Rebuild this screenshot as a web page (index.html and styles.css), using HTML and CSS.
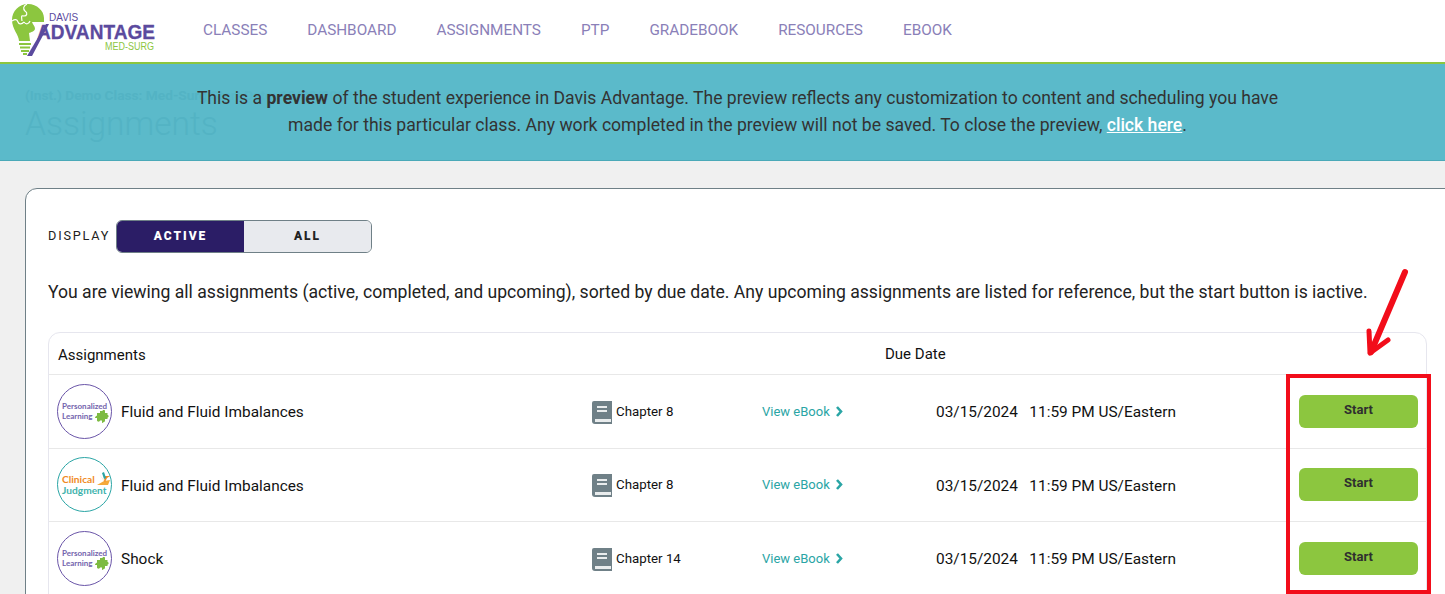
FILE: index.html
```html
<!DOCTYPE html>
<html lang="en">
<head>
<meta charset="utf-8">
<title>Assignments</title>
<link rel="stylesheet" href="styles.css">
</head>
<body>
<header class="topbar">
  <svg class="logo" width="160" height="62" viewBox="0 0 160 62">
    <path d="M28 4C37 4 44 11 44 18L44 22 32 22C33 25 35 26 35 29 34 32 31 32 29 33L30 41 19 41C19 35 12 29 12 20 12 11 19 4 28 4Z" fill="#8cc63f"/>
    <path d="M27 4C23 6 23 9 25 11 28 13 27 16 24 16 22 16 21 14 22 21M12 21C15 19 17 19 18 22 19 25 22 24 24 22M24 22C26 25 29 24 30 21" fill="none" stroke="#fff" stroke-width="1.2"/>
    <path d="M19 44H31M20 47.500H30M21 51H29M23 54H27" stroke="#8cc63f" stroke-width="2" fill="none"/>
    <polygon points="27,56 32,56 49,24 46,24" fill="#5b4a9e"/>
    <text x="49" y="21" class="logo-davis">DAVIS</text>
    <text x="37" y="39" class="logo-adv" textLength="118" lengthAdjust="spacingAndGlyphs">ADVANTAGE</text>
    <text x="105" y="50" class="logo-sub" textLength="49" lengthAdjust="spacingAndGlyphs">MED-SURG</text>
  </svg>
  <nav class="nav">
    <a>CLASSES</a><a>DASHBOARD</a><a>ASSIGNMENTS</a><a>PTP</a><a>GRADEBOOK</a><a>RESOURCES</a><a>EBOOK</a>
  </nav>
</header>

<section class="hero">
  <p class="hero-class">(Inst.) Demo Class: Med-Surg <span class="hero-dates">Start Date: 10/30/2023</span></p>
  <h1 class="hero-title">Assignments</h1>
  <p class="preview">This is a <b>preview</b> of the student experience in Davis Advantage. The preview reflects any customization to content and scheduling you have made for this particular class. Any work completed in the preview will not be saved. To close the preview, <a>click here</a>.</p>
</section>

<main class="page">
  <section class="card">
    <div class="display">
      <span class="display-label">DISPLAY</span>
      <div class="toggle">
        <span class="toggle-item toggle-on">ACTIVE</span>
        <span class="toggle-item">ALL</span>
      </div>
    </div>
    <p class="intro">You are viewing all assignments (active, completed, and upcoming), sorted by due date. Any upcoming assignments are listed for reference, but the start button is iactive.</p>
    <div class="table">
      <div class="row row-head">
        <span class="col-name head-name">Assignments</span>
        <span class="col-due">Due Date</span>
      </div>

      <div class="row">
        <div class="col-name">
          <span class="badge badge-pl"><span class="b1">Personalized</span><span class="b2">Learning <svg class="puzzle" width="14" height="13" viewBox="0 0 14 13"><path d="M5 1h2.500c0-1.500 2.500-1.500 2.500 0v2h2.500v2c1.500 0 1.500 2.500 0 2.500V9H10v2.500c-1.500 0-1.500 1.500-3 1.500V10.500H5c0 1.500-3 1.500-3 0V8H0c0-1.500 1-2 2-2.500V3h3z" fill="#7dbb42"/></svg></span></span>
          <span class="title">Fluid and Fluid Imbalances</span>
        </div>
        <div class="col-ch"><svg class="book" width="20" height="23" viewBox="0 0 20 23"><path d="M2 0h18v23H3a3 3 0 0 1-3-3V2a2 2 0 0 1 2-2z" fill="#6f8087"/><path d="M5 5h10v2H5zM5 9h10v2H5zM3 18h16v3H3z" fill="#fff" opacity=".85"/></svg><span>Chapter 8</span></div>
        <a class="col-ebook">View eBook <svg width="9" height="11" viewBox="0 0 9 11"><path d="M2 1l4 4.500-4 4.500" fill="none" stroke="#2aa5a5" stroke-width="2.600"/></svg></a>
        <span class="col-date">03/15/2024 &nbsp; 11:59 PM US/Eastern</span>
        <span class="btn">Start</span>
      </div>

      <div class="row">
        <div class="col-name">
          <span class="badge badge-cj"><span class="c1">Clinical <svg width="14" height="14" viewBox="0 0 14 14"><path d="M0 13 7 9l6-1-2 5z" fill="#f5a93a"/><path d="M2 2l5 7 1-5 5 0-3 2-2 4z" fill="#f08a24"/><path d="M5 1l2 6 2-1-2-6z" fill="#2aa5a5"/></svg></span><span class="c2">Judgment</span></span>
          <span class="title">Fluid and Fluid Imbalances</span>
        </div>
        <div class="col-ch"><svg class="book" width="20" height="23" viewBox="0 0 20 23"><path d="M2 0h18v23H3a3 3 0 0 1-3-3V2a2 2 0 0 1 2-2z" fill="#6f8087"/><path d="M5 5h10v2H5zM5 9h10v2H5zM3 18h16v3H3z" fill="#fff" opacity=".85"/></svg><span>Chapter 8</span></div>
        <a class="col-ebook">View eBook <svg width="9" height="11" viewBox="0 0 9 11"><path d="M2 1l4 4.500-4 4.500" fill="none" stroke="#2aa5a5" stroke-width="2.600"/></svg></a>
        <span class="col-date">03/15/2024 &nbsp; 11:59 PM US/Eastern</span>
        <span class="btn">Start</span>
      </div>

      <div class="row">
        <div class="col-name">
          <span class="badge badge-pl"><span class="b1">Personalized</span><span class="b2">Learning <svg class="puzzle" width="14" height="13" viewBox="0 0 14 13"><path d="M5 1h2.500c0-1.500 2.500-1.500 2.500 0v2h2.500v2c1.500 0 1.500 2.500 0 2.500V9H10v2.500c-1.500 0-1.500 1.500-3 1.500V10.500H5c0 1.500-3 1.500-3 0V8H0c0-1.500 1-2 2-2.500V3h3z" fill="#7dbb42"/></svg></span></span>
          <span class="title">Shock</span>
        </div>
        <div class="col-ch"><svg class="book" width="20" height="23" viewBox="0 0 20 23"><path d="M2 0h18v23H3a3 3 0 0 1-3-3V2a2 2 0 0 1 2-2z" fill="#6f8087"/><path d="M5 5h10v2H5zM5 9h10v2H5zM3 18h16v3H3z" fill="#fff" opacity=".85"/></svg><span>Chapter 14</span></div>
        <a class="col-ebook">View eBook <svg width="9" height="11" viewBox="0 0 9 11"><path d="M2 1l4 4.500-4 4.500" fill="none" stroke="#2aa5a5" stroke-width="2.600"/></svg></a>
        <span class="col-date">03/15/2024 &nbsp; 11:59 PM US/Eastern</span>
        <span class="btn">Start</span>
      </div>
    </div>
  </section>
</main>

<div class="mark-box"></div>
<svg class="mark-arrow" width="50" height="92" viewBox="0 0 50 92">
  <path d="M43 6 9 86" stroke="#f20d1a" stroke-width="6" stroke-linecap="round" fill="none"/>
  <path d="M8 87 7 65M8 87 26 74" stroke="#f20d1a" stroke-width="5" stroke-linecap="round" fill="none"/>
</svg>
</body>
</html>
```
FILE: styles.css
```css
* { box-sizing: border-box; }
html, body { margin: 0; height: 594px; overflow: hidden; }
body { background: #f0f0f0; font-family: Roboto, "Liberation Sans", sans-serif; color: #222; position: relative; }
p, h1 { margin: 0; }

.topbar { height: 64px; background: #fff; border-bottom: 2px solid #8cc63f; display: flex; align-items: center; }
.logo { display: block; flex: none; margin-right: 43px; }
.logo-davis { font: 400 10px "Liberation Sans", sans-serif; fill: #5b4a9e; }
.logo-adv { font: 700 21px "Liberation Sans", sans-serif; fill: #5b4a9e; stroke: #5b4a9e; stroke-width: .3px; }
.logo-sub { font: 400 10px "Liberation Sans", sans-serif; fill: #8cc63f; }
.nav { display: flex; gap: 40px; font-size: 15.3px; color: #8a80b8; padding-bottom: 2px; }

.hero { height: 97px; background: #5bbaca; border-bottom: 1px solid #4aa9b8; padding: 23px 25px 0; position: relative; color: #53b3c4; }
.hero-class { font-size: 13.7px; font-weight: 700; line-height: 16px; white-space: nowrap; }
.hero-dates { color: #57b6c7; }
.hero-title { font-size: 33.5px; font-weight: 300; line-height: 42px; }
.preview { position: absolute; left: 187.5px; width: 1100px; top: 21px; text-align: center; font-size: 17.6px; line-height: 27px; color: #333; }
.preview a { color: #fff; font-weight: 500; text-decoration: underline; }
.preview b { font-weight: 700; }

.page { padding: 27px 0 0 25px; }
.card { width: 1450px; height: 420px; background: #fff; border: 1px solid #6f8087; border-radius: 12px; padding: 31px 0 0 22px; }
.display { display: flex; align-items: center; gap: 5px; }
.display-label { font-size: 12.7px; letter-spacing: 1.8px; width: 63px; white-space: nowrap; padding-bottom: 2px; }
.toggle { display: flex; width: 256px; height: 33px; border: 1px solid #6f8087; border-radius: 6px; overflow: hidden; }
.toggle-item { flex: 1; display: flex; align-items: center; justify-content: center; background: #e8eaee; font-size: 12px; font-weight: 900; letter-spacing: 2px; padding-bottom: 1px; }
.toggle-on { background: #2b1d66; color: #fff; }
.intro { font-size: 17.6px; line-height: 24px; margin-top: 27px; white-space: nowrap; }

.table { width: 1379px; margin-top: 28px; border: 1px solid #e6e6ee; border-radius: 12px 12px 0 0; }
.row { display: grid; grid-template-columns: 535px 170px 174px 363px 119px; align-items: center; height: 73.5px; border-top: 1px solid #e8e8e8; padding-left: 8px; color: #111; }
.row-head { height: 41px; border-top: 0; font-size: 15px; }
.head-name { padding: 3px 0 0 1px; }
.row-head .col-due { grid-column: 3 / 5; padding-left: 123px; }
.col-name { display: flex; align-items: center; gap: 9px; }
.title { font-size: 15.4px; padding-top: 2px; }
.badge { width: 55px; height: 55px; border-radius: 50%; background: #fff; display: flex; flex-direction: column; justify-content: center; padding-left: 4px; flex: none; }
.badge-pl { border: 1px solid #6a55a8; color: #7364ad; font: 700 8px/10px Lato, sans-serif; }
.badge-cj { border: 1px solid #2aa5a5; font: 700 10.2px/11px Lato, sans-serif; }
.b1, .b2, .c1, .c2 { display: flex; align-items: center; gap: 2px; white-space: nowrap; }
.b2 { height: 10px; }
.c1 { color: #f08a24; height: 11px; }
.c2 { color: #3fb3ad; }
.col-ch { display: flex; align-items: center; gap: 4px; font-size: 13.3px; }
.book { margin-top: 2px; }
.col-ebook { font-size: 13px; color: #2aa5a5; display: flex; align-items: center; gap: 5px; }
.col-date { font-size: 15.4px; padding-top: 2px; }
.btn { width: 119px; height: 33px; background: #8cc63f; border-radius: 6px; display: flex; align-items: center; justify-content: center; padding-bottom: 4px; font-size: 13px; font-weight: 700; color: #2f2f2f; }

.mark-box { position: absolute; left: 1286px; top: 374px; width: 145px; height: 220px; border: 4px solid #f20d1a; }
.mark-arrow { position: absolute; left: 1362px; top: 266px; }
```
